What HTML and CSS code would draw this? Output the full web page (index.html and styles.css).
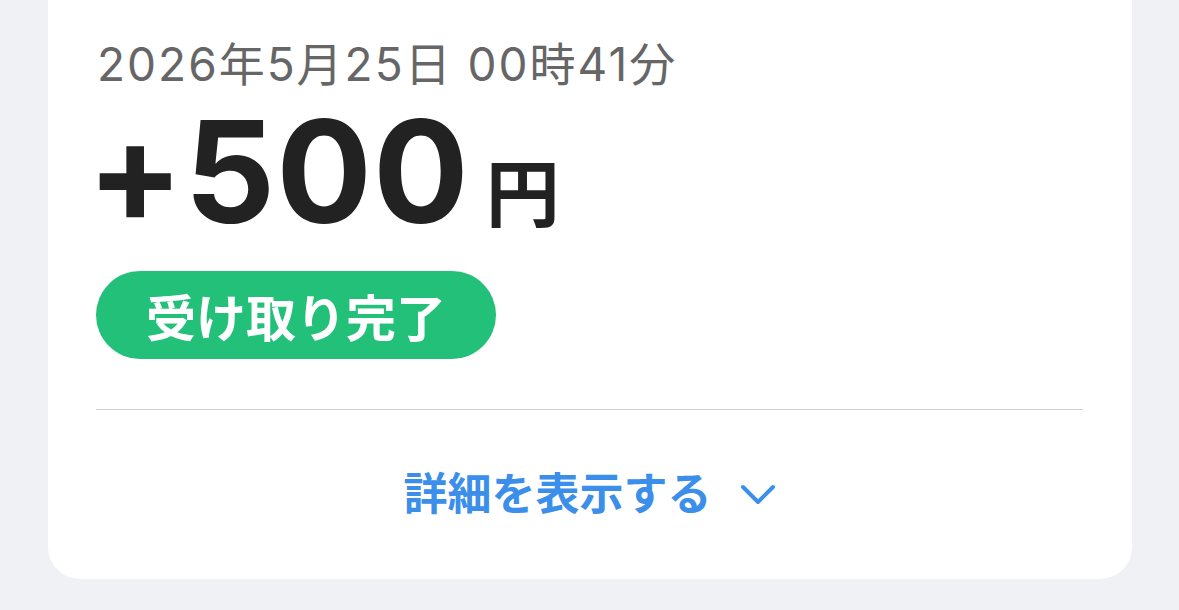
FILE: index.html
```html
<!DOCTYPE html>
<html lang="ja">
<head>
  <meta charset="UTF-8" />
  <meta name="viewport" content="width=device-width, initial-scale=1.0"/>
  <title>受け取り履歴</title>
  <link rel="stylesheet" href="styles.css">
</head>
<body>

<div class="page">
  <div class="history-card">
    <div class="history-body">
      <p class="history-date">2026年5月25日 00時41分</p>
      <p class="history-amount">+500<span class="yen">円</span></p>
      <span class="status-badge">受け取り完了</span>
    </div>

    <button class="details-toggle" type="button">
      <span>詳細を表示する</span>
      <svg class="chevron" viewBox="0 0 36 22" width="36" height="22" aria-hidden="true">
        <path d="M3 3 L18 18 L33 3" fill="none" stroke="currentColor" stroke-width="4" stroke-linecap="round" stroke-linejoin="round"/>
      </svg>
    </button>
  </div>
</div>

</body>
</html>
```

FILE: styles.css
```css
* {
  box-sizing: border-box;
}
body {
  margin: 0;
  background: #f0f1f5;
  font-family: Inter, "Noto Sans CJK JP", sans-serif;
}
.page {
  padding: 0 47px 31px 48px;
}
.history-card {
  background: #fff;
  border-radius: 0 0 32px 32px;
  padding: 0 49px 0 48px;
  height: 579px;
  display: flex;
  flex-direction: column;
}
.history-body {
  padding-top: 36px;
  padding-bottom: 50px;
  border-bottom: 1px solid #cfcfd2;
}
.history-date {
  margin: 0 0 0 1px;
  font-size: 46px;
  line-height: 56px;
  color: #666;
  letter-spacing: 2px;
}
.history-amount {
  margin: 14px 0 0 -9px;
  font-size: 142px;
  font-weight: bold;
  line-height: 130px;
  color: #222;
  letter-spacing: 1px;
}
.yen {
  font-family: "Noto Sans CJK JP", sans-serif;
  font-size: 74px;
  margin-left: 16px;
  letter-spacing: 0;
  vertical-align: 2px;
}
.status-badge {
  display: inline-block;
  margin-top: 17px;
  height: 88px;
  padding: 0 50px;
  border-radius: 44px;
  background: #23c07a;
  color: #fff;
  font-family: "Noto Sans CJK JP", sans-serif;
  font-weight: bold;
  font-size: 50px;
  line-height: 88px;
}
.details-toggle {
  margin-top: 51px;
  align-self: center;
  display: flex;
  align-items: center;
  gap: 28px;
  background: none;
  border: none;
  padding: 0;
  color: #3b8eea;
  font-family: "Noto Sans CJK JP", sans-serif;
  font-weight: bold;
  font-size: 44px;
  line-height: 60px;
  cursor: pointer;
}
.chevron {
  margin-top: 8px;
}
```
